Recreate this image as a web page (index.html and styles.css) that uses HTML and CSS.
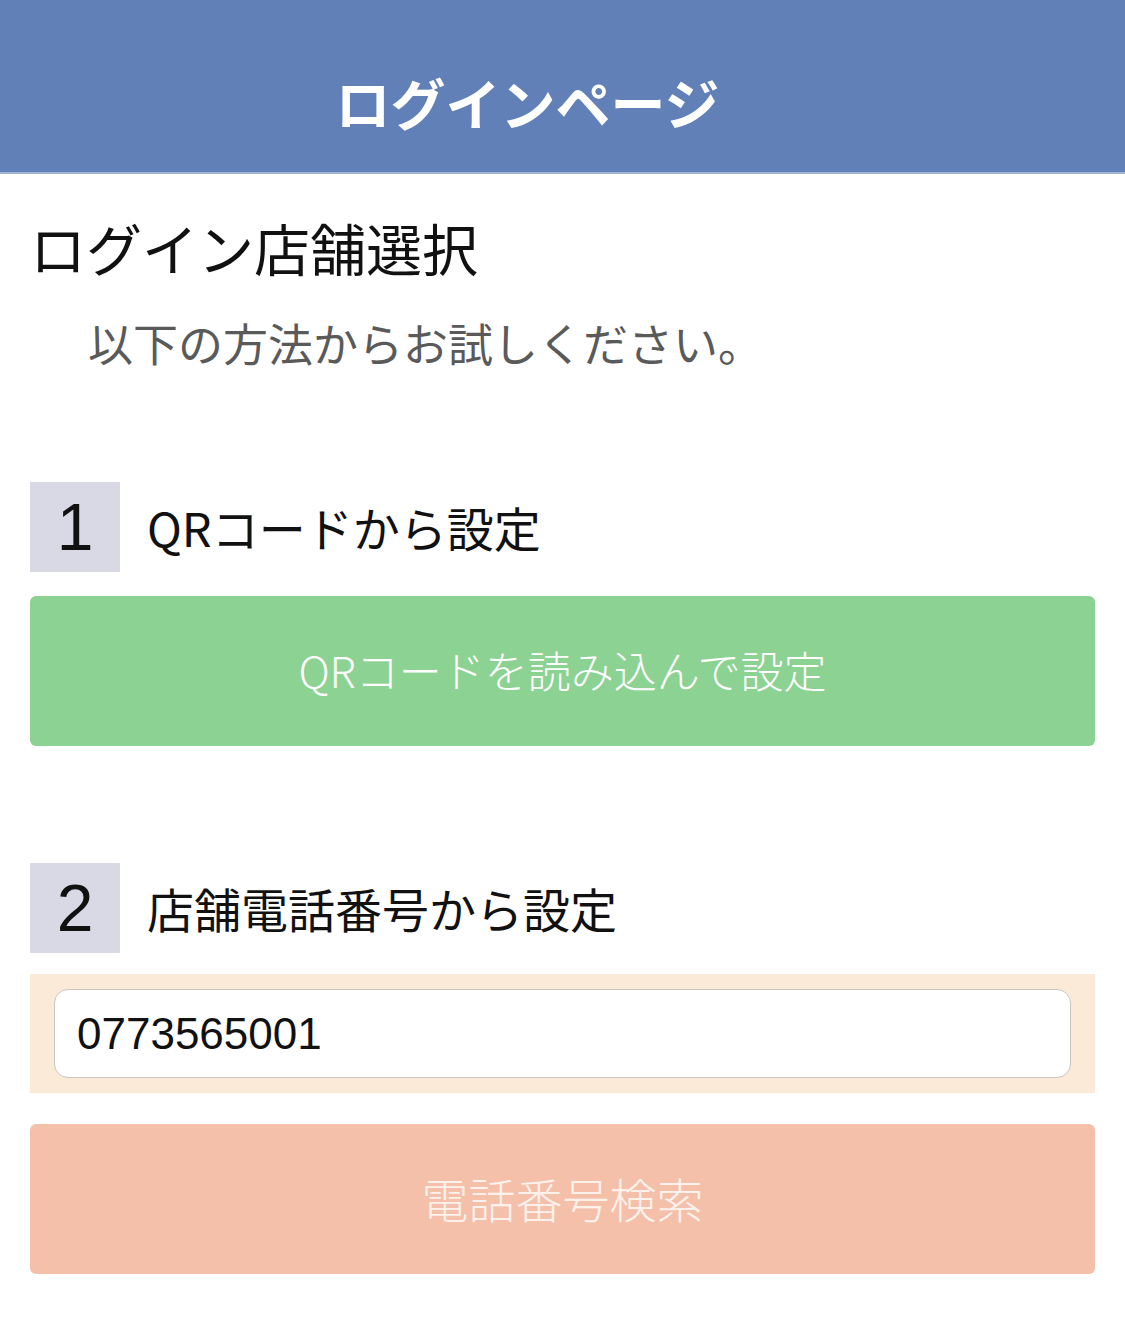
FILE: index.html
```html
<!DOCTYPE html>
<html lang="ja">
<head>
<meta charset="utf-8">
<title>ログインページ</title>
<link rel="stylesheet" href="styles.css">
</head>
<body>
<header class="topbar">
  <h1 class="topbar-title">ログインページ</h1>
</header>
<main class="content">
  <h2 class="page-title">ログイン店舗選択</h2>
  <p class="lead">以下の方法からお試しください。</p>

  <section class="step step-qr">
    <div class="step-head">
      <div class="step-num">1</div>
      <div class="step-label">QRコードから設定</div>
    </div>
    <button class="btn btn-green" type="button">QRコードを読み込んで設定</button>
  </section>

  <section class="step step-tel">
    <div class="step-head">
      <div class="step-num">2</div>
      <div class="step-label">店舗電話番号から設定</div>
    </div>
    <div class="input-wrap">
      <input class="tel-input" type="text" value="0773565001">
    </div>
    <button class="btn btn-salmon" type="button">電話番号検索</button>
  </section>
</main>
</body>
</html>
```

FILE: styles.css
```css
* { box-sizing: border-box; }
html, body { margin: 0; padding: 0; background: #ffffff; }
body {
  font-family: "Noto Sans CJK JP", "Noto Sans", sans-serif;
  color: #111;
  width: 1125px;
  height: 1332px;
  overflow: hidden;
}
.topbar {
  height: 174px;
  background: #6180b8;
  border-bottom: 2px solid #a2b3d2;
  display: flex;
  align-items: center;
  justify-content: center;
  padding-right: 70px;
}
.topbar-title {
  margin: 0;
  color: #ffffff;
  font-size: 55px;
  font-weight: 700;
  line-height: 66px;
  padding-top: 30px;
}
.content {
  padding: 0 30px;
}
.page-title {
  margin: 40px 0 0 0;
  font-size: 56px;
  font-weight: 400;
  line-height: 66px;
  color: #111;
}
.lead {
  margin: 30px 0 0 58px;
  font-size: 45px;
  line-height: 66px;
  color: #5a5a5a;
}
.step-qr { margin-top: 106px; }
.step-tel { margin-top: 117px; }
.step-head {
  display: flex;
  align-items: center;
  gap: 27px;
}
.step-num {
  width: 90px;
  height: 90px;
  background: #d8d9e4;
  display: flex;
  align-items: center;
  justify-content: center;
  font-family: "Liberation Sans", "Noto Sans", sans-serif;
  font-size: 66px;
  line-height: 1;
  color: #111;
}
.step-label {
  font-size: 47px;
  line-height: 66px;
  color: #111;
}
.btn {
  display: flex;
  align-items: center;
  justify-content: center;
  width: 100%;
  height: 150px;
  border: 0;
  border-radius: 6px;
  font-family: "Noto Sans CJK JP", "Noto Sans", sans-serif;
  font-weight: 300;
  color: #ffffff;
  padding: 0 0 4px 0;
}
.btn-green {
  margin-top: 24px;
  background: #8cd292;
  font-size: 43px;
}
.btn-salmon {
  margin-top: 31px;
  background: #f4c0aa;
  color: #fdf1ec;
  font-size: 47px;
}
.input-wrap {
  margin-top: 21px;
  background: #fcead9;
  padding: 15px 24px;
}
.tel-input {
  display: block;
  width: 100%;
  height: 89px;
  border: 1px solid #c9c6c2;
  border-radius: 14px;
  background: #ffffff;
  padding: 0 22px;
  font-family: "Liberation Sans", Arial, sans-serif;
  font-size: 44px;
  color: #111;
  outline: none;
}
```
